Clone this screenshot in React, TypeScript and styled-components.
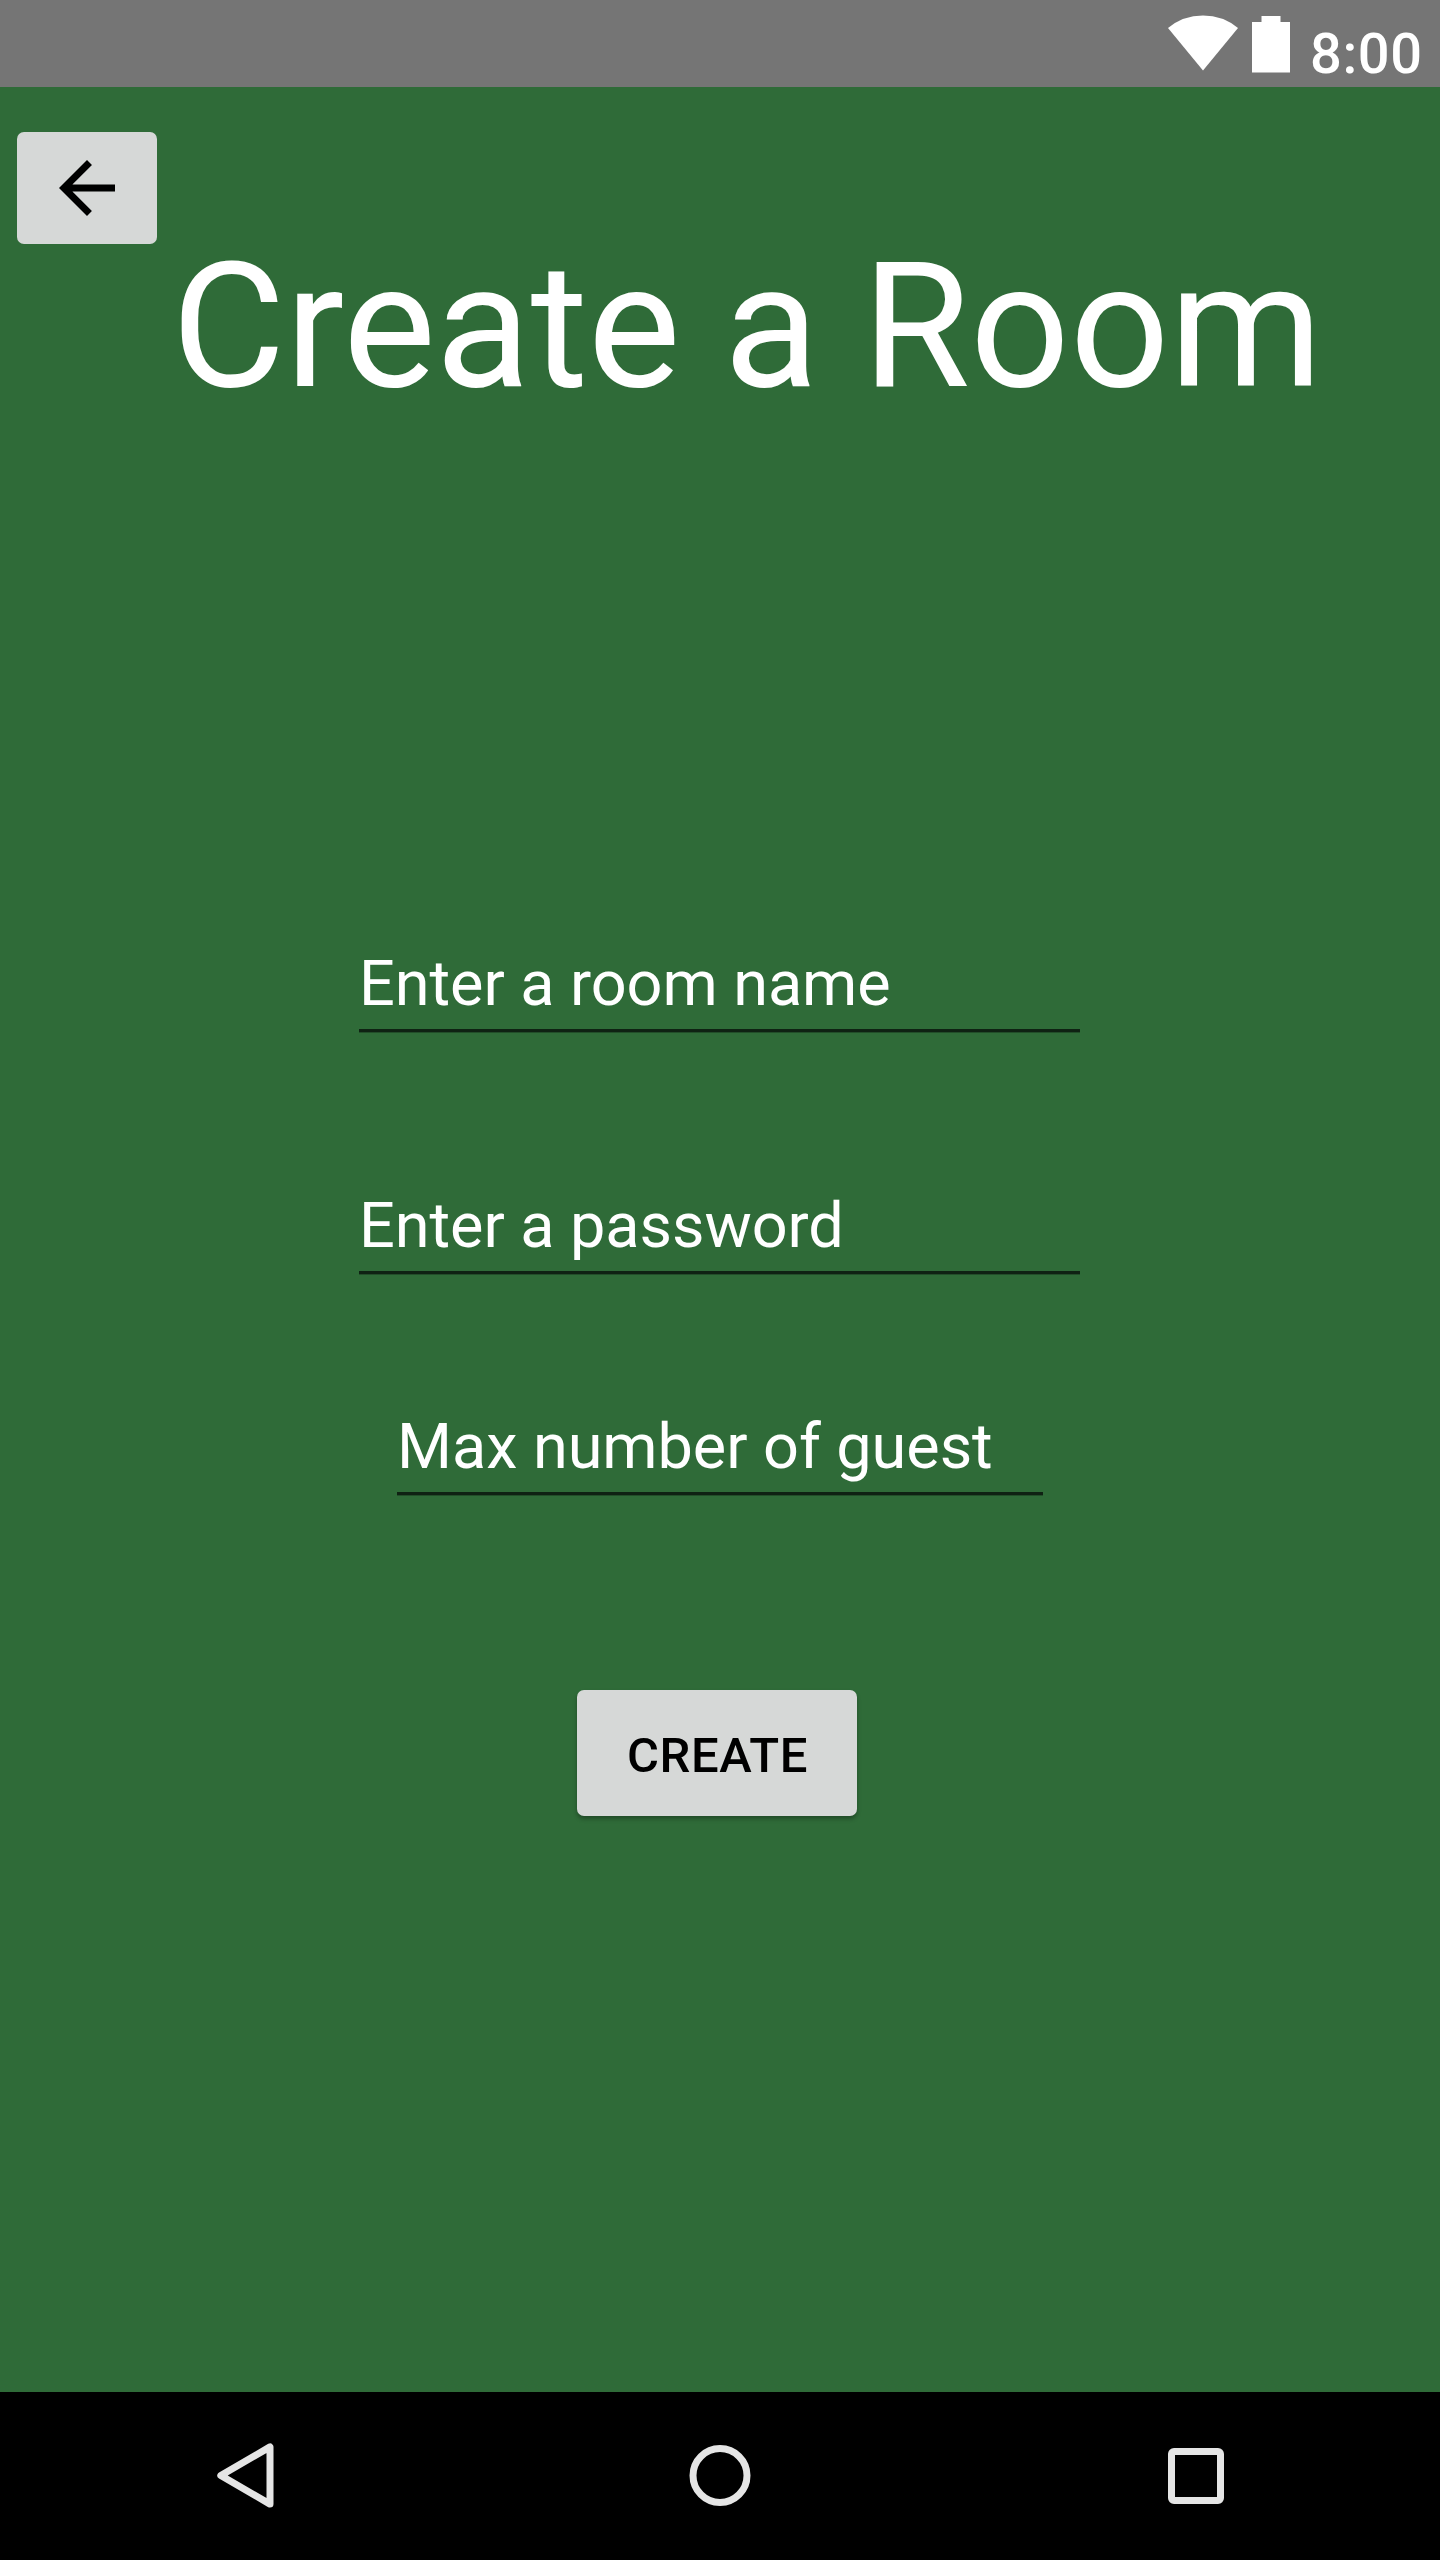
import React from "react";
import styled, { createGlobalStyle } from "styled-components";

const GlobalStyle = createGlobalStyle`
  html, body {
    margin: 0;
    padding: 0;
  }
  * {
    box-sizing: border-box;
  }
`;

const Screen = styled.div`
  display: flex;
  flex-direction: column;
  width: 1440px;
  height: 2560px;
  overflow: hidden;
  background: #2f6b38;
  font-family: Roboto, "Liberation Sans", sans-serif;
`;

const StatusBar = styled.header`
  display: flex;
  justify-content: flex-end;
  height: 87px;
  background: #757575;
  color: #fff;
`;

const StatusIcons = styled.svg`
  flex: none;
  width: 144px;
  height: 87px;
`;

const Clock = styled.time`
  width: 130px;
  font-size: 56px;
  font-weight: 500;
  letter-spacing: 0.6px;
  line-height: 66px;
  padding-top: 21px;
  white-space: nowrap;
`;

const Content = styled.main`
  display: flex;
  flex: 1;
  flex-direction: column;
  align-items: flex-start;
  padding-top: 45px;
`;

const BaseButton = styled.button`
  display: flex;
  align-items: center;
  justify-content: center;
  padding: 0;
  border: 0;
  border-radius: 7px;
  background: #d6d8d7;
  color: #000;
`;

const BackButton = styled(BaseButton)`
  width: 140px;
  height: 112px;
  margin-left: 17px;

  svg {
    width: 84px;
    height: 84px;
  }
`;

const Title = styled.h1`
  margin: 3px 0 0 171.5px;
  color: #fff;
  font-size: 175px;
  font-weight: 400;
  letter-spacing: -0.1px;
  line-height: 160px;
  white-space: nowrap;
`;

const Form = styled.form`
  display: flex;
  flex-direction: column;
  align-items: flex-start;
  width: 100%;
  margin-top: 539px;
`;

const Field = styled.label<{ $left: number; $width: number; $gap: number }>`
  display: block;
  width: ${(p) => p.$width}px;
  height: 87px;
  margin-left: ${(p) => p.$left}px;
  margin-bottom: ${(p) => p.$gap}px;
  padding-bottom: 8px;
  border-bottom: 1px solid #224e29;
  box-shadow: inset 0 -3px 0 #0f2213;
  color: #fff;
  font-size: 63px;
  letter-spacing: -0.06px;
  line-height: 75px;
  white-space: nowrap;
`;

const CreateButton = styled(BaseButton)`
  width: 280px;
  height: 126px;
  margin-left: 577px;
  padding-top: 5px;
  padding-left: 1px;
  box-shadow: 0 3px 4px rgba(0, 0, 0, 0.3);
  font-family: inherit;
  font-size: 49px;
  font-weight: 500;
  letter-spacing: 0.6px;
  line-height: 58px;
`;

const NavBar = styled.nav`
  display: flex;
  height: 168px;
  padding: 0 202.5px;
  justify-content: space-between;
  align-items: center;
  background: #000;
`;

const NavIcon = styled.svg`
  width: 84px;
  height: 84px;
  color: #e5e5e5;
`;

const fields = [
  { text: "Enter a room name", left: 359, width: 721, gap: 155 },
  { text: "Enter a password", left: 359, width: 721, gap: 134 },
  { text: "Max number of guest", left: 397, width: 646, gap: 194 },
];

export default function App() {
  return (
    <>
      <GlobalStyle />
      <Screen>
        <StatusBar>
          <StatusIcons viewBox="1166 0 144 87" fill="#fff">
            <path d="M1203 70.5 1168 28Q1183 15.5 1203 15.5T1238 28Z" />
            <path d="M1252 22h9.5v-6h19v6h9.5v50.5h-38z" />
          </StatusIcons>
          <Clock>8:00</Clock>
        </StatusBar>
        <Content>
          <BackButton aria-label="Back">
            <svg viewBox="0 0 24 24">
              <path
                fill="currentColor"
                d="M20 11H7.83l5.59-5.59L12 4l-8 8 8 8 1.41-1.41L7.83 13H20v-2z"
              />
            </svg>
          </BackButton>
          <Title>Create a Room</Title>
          <Form>
            {fields.map((f) => (
              <Field key={f.text} $left={f.left} $width={f.width} $gap={f.gap}>
                {f.text}
              </Field>
            ))}
            <CreateButton type="button">CREATE</CreateButton>
          </Form>
        </Content>
        <NavBar>
          <NavIcon viewBox="0 0 84 84" fill="none">
            <path
              d="M67 12.9V70.1L17.8 41.5Z"
              stroke="currentColor"
              strokeWidth="7"
              strokeLinejoin="round"
            />
          </NavIcon>
          <NavIcon viewBox="0 0 84 84" fill="none">
            <circle cx="42" cy="41.5" r="27" stroke="currentColor" strokeWidth="7" />
          </NavIcon>
          <NavIcon viewBox="0 0 84 84">
            <path
              fill="currentColor"
              fillRule="evenodd"
              d="M20 14H64a6 6 0 0 1 6 6V64a6 6 0 0 1-6 6H20a6 6 0 0 1-6-6V20a6 6 0 0 1 6-6zM21 21V63H63V21z"
            />
          </NavIcon>
        </NavBar>
      </Screen>
    </>
  );
}
